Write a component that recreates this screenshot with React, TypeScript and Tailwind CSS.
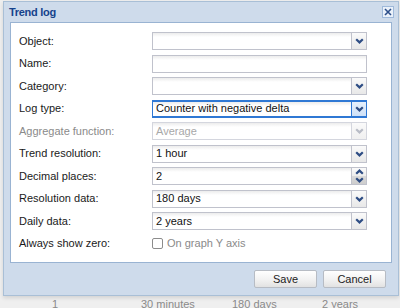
import React from "react";

const Chevron = ({ up = false, color = "#2e4d84" }: { up?: boolean; color?: string }) => (
  <svg width="9" height="6" viewBox="0 0 9 6" className={up ? "rotate-180" : ""}>
    <polyline points="1.2,1.2 4.5,4.4 7.8,1.2" fill="none" stroke={color} strokeWidth="2.2" />
  </svg>
);

const inputBase =
  "h-[18px] w-[215px] flex border bg-white bg-[linear-gradient(#ececec,#ffffff_4px)]";

function Combo({ value, focused = false, disabled = false }: { value?: string; focused?: boolean; disabled?: boolean }) {
  return (
    <div
      className={`${inputBase} ${focused ? "border-[#2f78d4] border-y-2" : disabled ? "border-[#d4d6de]" : "border-[#c0c2cc]"}`}
    >
      <div className={`flex-1 flex items-center pl-[3px] text-[11px] leading-none ${disabled ? "text-[#a8a8a8]" : "text-[#111]"}`}>
        {value}
      </div>
      <div
        className={`w-[15px] flex items-center justify-center border-l ${
          focused
            ? "border-[#2f78d4] bg-[linear-gradient(#e6f0fc,#cfe1f7)]"
            : disabled
            ? "border-[#d4d6de] bg-[linear-gradient(#fafafa,#f0f0f0)]"
            : "border-[#c0c2cc] bg-[linear-gradient(#fafafa,#e8e8e8)]"
        }`}
      >
        <Chevron color={disabled ? "#b8bcc6" : "#2e4d84"} />
      </div>
    </div>
  );
}

function TextField({ value }: { value?: string }) {
  return (
    <div className={`${inputBase} border-[#c0c2cc] items-center pl-[3px] text-[11px] leading-none text-[#111]`}>{value}</div>
  );
}

function Spinner({ value }: { value: string }) {
  return (
    <div className={`${inputBase} border-[#c0c2cc]`}>
      <div className="flex-1 flex items-center pl-[3px] text-[11px] leading-none text-[#111]">{value}</div>
      <div className="w-[15px] flex flex-col border-l border-[#c0c2cc]">
        <div className="flex-1 flex items-center justify-center bg-[linear-gradient(#fafafa,#ededed)]">
          <Chevron up />
        </div>
        <div className="flex-1 flex items-center justify-center bg-[linear-gradient(#dadada,#cdcdcd)]">
          <Chevron />
        </div>
      </div>
    </div>
  );
}

function Row({ label, children, muted = false }: { label: string; children: React.ReactNode; muted?: boolean }) {
  return (
    <div className="flex items-center h-[18px]">
      <div className={`w-[133px] text-[11px] leading-none ${muted ? "text-[#8a8a8a]" : "text-[#1a1a1a]"}`}>{label}</div>
      {children}
    </div>
  );
}

export default function App() {
  return (
    <div className="relative w-[400px] h-[308px] overflow-hidden bg-[#efefef] font-['Liberation_Sans',Arial,sans-serif]">
      {/* background page content */}
      <div className="pt-[299px] flex text-[11px] leading-none text-[#8a8a8a]">
        <div className="w-[52px]" />
        <div className="w-[89px]">1</div>
        <div className="w-[91px]">30 minutes</div>
        <div className="w-[90px]">180 days</div>
        <div>2 years</div>
      </div>

      {/* dialog window */}
      <div className="absolute left-[3px] top-[1px] w-[396px] h-[295px] border border-[#a9bfd6] bg-[#cedbeb] flex flex-col shadow-[0_2px_4px_rgba(0,0,0,0.12)]">
        <div className="h-[20px] flex items-center justify-between pl-[5px] pr-[4px]">
          <span className="text-[11px] font-bold text-[#15428b] tracking-[-0.3px] leading-none">Trend log</span>
          <div className="w-[12px] h-[12px] border border-[#9fb9da] bg-[#eaf1fa] flex items-center justify-center">
            <svg width="8" height="8" viewBox="0 0 8 8">
              <path d="M1 1 L7 7 M7 1 L1 7" stroke="#2d4f8a" strokeWidth="1.6" />
            </svg>
          </div>
        </div>

        <div className="mx-[6px] h-[241px] border border-[#99b3d2] bg-white pl-[8px] pt-[9px] flex flex-col gap-[4.5px]">
          <Row label="Object:">
            <Combo />
          </Row>
          <Row label="Name:">
            <TextField />
          </Row>
          <Row label="Category:">
            <Combo />
          </Row>
          <Row label="Log type:">
            <Combo value="Counter with negative delta" focused />
          </Row>
          <Row label="Aggregate function:" muted>
            <Combo value="Average" disabled />
          </Row>
          <Row label="Trend resolution:">
            <Combo value="1 hour" />
          </Row>
          <Row label="Decimal places:">
            <Spinner value="2" />
          </Row>
          <Row label="Resolution data:">
            <Combo value="180 days" />
          </Row>
          <Row label="Daily data:">
            <Combo value="2 years" />
          </Row>
          <Row label="Always show zero:">
            <div className="flex items-center gap-[4px]">
              <div className="w-[11px] h-[11px] border border-[#8c8c8c] rounded-[2px] bg-white" />
              <span className="text-[11px] leading-none text-[#8a8a8a]">On graph Y axis</span>
            </div>
          </Row>
        </div>

        <div className="flex justify-end gap-[6px] pt-[7px] pr-[12px]">
          {["Save", "Cancel"].map((t) => (
            <div
              key={t}
              className="w-[63px] h-[18px] rounded-[2px] border border-[#b7bcc4] bg-[linear-gradient(#ffffff,#f3f3f3_50%,#e2e2e2)] flex items-center justify-center text-[11px] leading-none text-[#222]"
            >
              {t}
            </div>
          ))}
        </div>
      </div>
    </div>
  );
}
